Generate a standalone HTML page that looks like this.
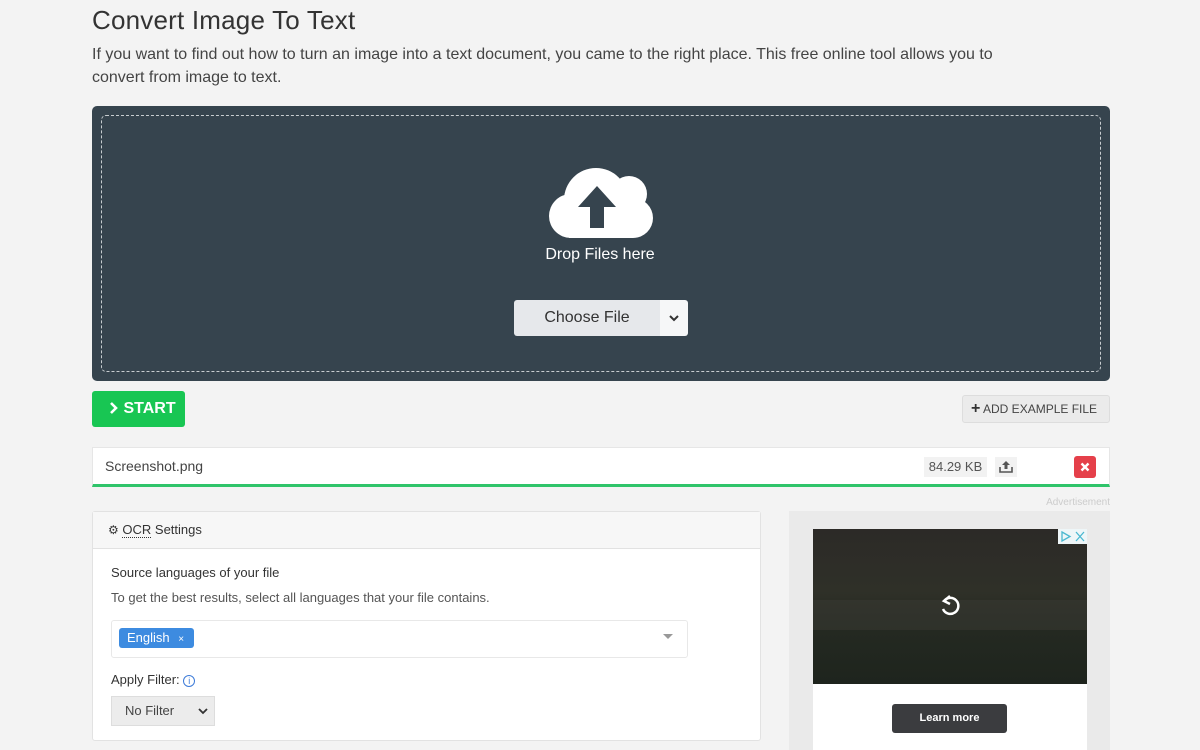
<!DOCTYPE html>
<html><head><meta charset="utf-8"><style>
*{box-sizing:border-box;margin:0;padding:0}
body{width:1200px;height:750px;overflow:hidden;background:#f3f3f3;font-family:"Liberation Sans",sans-serif;color:#333;position:relative}
.a{position:absolute}
</style></head><body>
<div class="a" style="left:92px;top:5px;font-size:26px;color:#333;letter-spacing:0.2px">Convert Image To Text</div>
<div class="a" style="left:92px;top:43px;width:1010px;font-size:16px;line-height:23px;color:#444">If you want to find out how to turn an image into a text document, you came to the right place. This free online tool allows you to<br>convert from image to text.</div>
<div class="a" style="left:92px;top:106px;width:1018px;height:275px;background:#36444e;border-radius:5px"></div>
<div class="a" style="left:101px;top:115px;width:1000px;height:257px;border:1px dashed #c8cdd0;border-radius:5px"></div>
<svg class="a" style="left:549px;top:166px" width="104" height="76" viewBox="0 0 104 76">
<g fill="#fff">
<circle cx="47" cy="34" r="32"/>
<circle cx="80" cy="28" r="18"/>
<circle cx="22" cy="50" r="22"/>
<circle cx="84" cy="52" r="20"/>
<rect x="22" y="40" width="62" height="32" />
<rect x="20" y="50" width="64" height="22" rx="0"/>
</g>
<path d="M41 62 L41 41 L29 41 L48 20 L67 41 L55 41 L55 62 Z" fill="#36444e"/>
</svg>
<div class="a" style="left:500px;top:246px;width:200px;text-align:center;color:#fff;font-size:16px">Drop Files here</div>
<div class="a" style="left:514px;top:300px;width:146px;height:36px;background:#e6e8eb;border-radius:3px 0 0 3px;text-align:center;line-height:36px;font-size:16px;color:#333">Choose File</div>
<div class="a" style="left:660px;top:300px;width:28px;height:36px;background:#f6f7f8;border-radius:0 3px 3px 0;text-align:center;line-height:36px;font-size:12px;color:#333">
<svg width="10" height="8" viewBox="0 0 10 8"><path d="M1 2 L5 6 L9 2" stroke="#333" stroke-width="2" fill="none"/></svg></div>
<div class="a" style="left:92px;top:391px;width:93px;height:36px;background:#18c653;border-radius:3px;color:#fff;font-weight:bold;font-size:16px;line-height:36px;padding-left:17px">
<svg width="10" height="12" viewBox="0 0 10 12" style="vertical-align:-1px"><path d="M2 1 L7 6 L2 11" stroke="#fff" stroke-width="2.6" fill="none"/></svg> START</div>
<div class="a" style="left:962px;top:395px;width:148px;height:28px;background:#ebebeb;border:1px solid #ddd;border-radius:3px;font-size:12px;line-height:26px;color:#444;padding-left:8px;white-space:nowrap"><b style="font-size:16px;color:#333">+</b> ADD EXAMPLE FILE</div>
<div class="a" style="left:92px;top:447px;width:1018px;height:40px;background:#fff;border:1px solid #e6e6e6;border-bottom:3px solid #2fc46a"></div>
<div class="a" style="left:105px;top:458px;font-size:14px;color:#444">Screenshot.png</div>
<div class="a" style="left:924px;top:457px;width:63px;height:20px;background:#f2f2f2;font-size:13px;line-height:20px;text-align:center;color:#555">84.29 KB</div>
<div class="a" style="left:995px;top:457px;width:22px;height:20px;background:#f2f2f2"><svg width="22" height="20" viewBox="0 0 22 20"><path d="M5 10 V15 H17 V10" stroke="#555" stroke-width="1.6" fill="none"/><path d="M11 4 L7 8 H9.5 V12 H12.5 V8 H15 Z" fill="#555"/></svg></div>
<div class="a" style="left:1074px;top:456px;width:22px;height:22px;background:#e5404a;border-radius:3px"><svg width="22" height="22"><path d="M7.5 7.5 L14.5 14.5 M14.5 7.5 L7.5 14.5" stroke="#fff" stroke-width="2.4"/></svg></div>
<div class="a" style="left:1000px;top:497px;width:110px;text-align:right;font-size:10px;color:#ccc">Advertisement</div>
<div class="a" style="left:92px;top:511px;width:669px;height:230px;background:#fff;border:1px solid #e2e2e2;border-radius:3px"></div>
<div class="a" style="left:93px;top:512px;width:667px;height:37px;background:#f7f7f7;border-bottom:1px solid #e2e2e2"></div>
<div class="a" style="left:108px;top:522px;font-size:13px;color:#333"><span style="font-size:12px">⚙</span> <span style="border-bottom:1px dotted #333">OCR</span> Settings</div>
<div class="a" style="left:111px;top:565px;font-size:13px;color:#333">Source languages of your file</div>
<div class="a" style="left:111px;top:590px;font-size:13px;color:#555">To get the best results, select all languages that your file contains.</div>
<div class="a" style="left:111px;top:620px;width:577px;height:38px;border:1px solid #e8e8e8;border-radius:3px;background:#fff"></div>
<div class="a" style="left:119px;top:628px;width:75px;height:20px;background:#3d8be0;border-radius:3px;color:#fff;font-size:13px;line-height:20px;padding-left:8px">English <span style="font-size:10px;margin-left:5px">×</span></div>
<div class="a" style="left:663px;top:634px;width:0;height:0;border-left:5px solid transparent;border-right:5px solid transparent;border-top:5px solid #999"></div>
<div class="a" style="left:111px;top:672px;font-size:13px;color:#333">Apply Filter: <span style="display:inline-block;width:12px;height:12px;border:1px solid #3d7bd8;border-radius:50%;font-size:9px;line-height:10px;text-align:center;color:#3d7bd8">i</span></div>
<div class="a" style="left:111px;top:696px;width:104px;height:30px;background:#ececec;border:1px solid #ddd;font-size:13px;line-height:28px;padding-left:13px;color:#444">No Filter<svg class="a" style="left:86px;top:10px" width="10" height="8"><path d="M1 2 L5 6 L9 2" stroke="#333" stroke-width="1.8" fill="none"/></svg></div>
<div class="a" style="left:789px;top:511px;width:321px;height:239px;background:#eaeaea"></div>
<div class="a" style="left:813px;top:529px;width:274px;height:155px;background:linear-gradient(180deg,#2c2a27 0%,#2f3028 40%,#252a22 60%,#1e241d 100%)"></div>
<div class="a" style="left:813px;top:600px;width:274px;height:30px;background:#3a3a34;opacity:.5"></div>
<svg class="a" style="left:1058px;top:529px" width="29" height="15"><rect width="29" height="15" fill="#eef6f8"/><path d="M4 3 L12 7.5 L4 12 Z" fill="none" stroke="#4ab8d0" stroke-width="1.3"/><path d="M18 3 L26 12 M26 3 L18 12" stroke="#4ab8d0" stroke-width="1.3"/></svg>
<svg class="a" style="left:938px;top:593px" width="24" height="24"><path d="M6 8 A8 8 0 1 1 5 16" stroke="#fff" stroke-width="2.5" fill="none"/><path d="M12 3 L6 8 L12 11" fill="none" stroke="#fff" stroke-width="2.5"/></svg>
<div class="a" style="left:813px;top:684px;width:274px;height:66px;background:#fff"></div>
<div class="a" style="left:892px;top:704px;width:115px;height:29px;background:#3b3c3f;border-radius:3px;color:#fff;font-weight:bold;font-size:11px;line-height:29px;text-align:center">Learn more</div>
</body></html>
